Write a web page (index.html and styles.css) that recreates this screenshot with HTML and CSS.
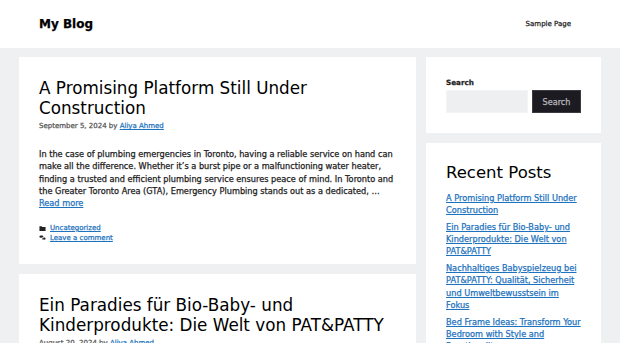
FILE: index.html
```html
<!DOCTYPE html>
<html lang="en">
<head>
  <meta charset="UTF-8">
  <meta name="viewport" content="width=device-width, initial-scale=1.0">
  <title>My Blog</title>
  <link rel="stylesheet" href="styles.css">
</head>
<body>
  <header class="site-header">
    <p class="site-title">My Blog</p>
    <nav class="main-nav">
      <a href="#">Sample Page</a>
    </nav>
  </header>

  <div class="site-content">
    <main class="content-area">
      <article class="post">
        <h2 class="entry-title">A Promising Platform Still Under Construction</h2>
        <div class="entry-meta">September 5, 2024 by <a href="#">Aliya Ahmed</a></div>
        <div class="entry-summary">
          <p>In the case of plumbing emergencies in Toronto, having a reliable service on hand can make all the difference. Whether it’s a burst pipe or a malfunctioning water heater, finding a trusted and efficient plumbing service ensures peace of mind. In Toronto and the Greater Toronto Area (GTA), Emergency Plumbing stands out as a dedicated, …<a class="read-more" href="#">Read more</a></p>
        </div>
        <footer class="entry-footer">
          <div class="meta-line">
            <svg class="meta-icon" viewBox="0 0 16 16"><path d="M1 3h5l1.5 1.5H15v9H1z" fill="#222"/></svg>
            <a href="#">Uncategorized</a>
          </div>
          <div class="meta-line">
            <svg class="meta-icon" viewBox="0 0 16 16"><path d="M1 3.5C1 1.8 3 1 5.5 1S10 1.8 10 3.5 8 6 5.5 6c-.6 0-1.1 0-1.6-.2L1.5 7.2l.6-2C1.4 4.7 1 4.1 1 3.5z" fill="#222"/><path d="M11 5c2.4.2 4 1.4 4 2.9 0 .7-.4 1.3-1.100 1.8l.6 2-2.4-1.4c-.5.1-1 .2-1.6.2-2 0-3.6-.8-4.2-2 2.6-.2 4.6-1.6 4.7-3.5z" fill="#222"/></svg>
            <a href="#">Leave a comment</a>
          </div>
        </footer>
      </article>

      <article class="post">
        <h2 class="entry-title">Ein Paradies für Bio-Baby- und Kinderprodukte: Die Welt von PAT&amp;PATTY</h2>
        <div class="entry-meta">August 20, 2024 by <a href="#">Aliya Ahmed</a></div>
        <div class="entry-summary">
          <p>Wenn es um die Bedürfnisse unserer Kleinsten geht, wollen Eltern nur das Beste. Nachhaltige und biologische Produkte sind für viele Familien …</p>
        </div>
      </article>
    </main>

    <aside class="sidebar">
      <section class="widget">
        <form class="search-form">
          <label class="search-label" for="s">Search</label>
          <div class="search-row">
            <input class="search-input" type="search" id="s">
            <button class="search-button" type="button">Search</button>
          </div>
        </form>
      </section>

      <section class="widget">
        <h2 class="widget-title">Recent Posts</h2>
        <ul class="recent-posts">
          <li><a href="#">A Promising Platform Still Under Construction</a></li>
          <li><a href="#">Ein Paradies für Bio-Baby- und Kinderprodukte: Die Welt von PAT&amp;PATTY</a></li>
          <li><a href="#">Nachhaltiges Babyspielzeug bei PAT&amp;PATTY: Qualität, Sicherheit und Umweltbewusstsein im Fokus</a></li>
          <li><a href="#">Bed Frame Ideas: Transform Your Bedroom with Style and Functionality</a></li>
        </ul>
      </section>
    </aside>
  </div>
</body>
</html>
```

FILE: styles.css
```css
body {
  margin: 0;
  background-color: #eff0f2;
  color: #222;
  font-family: "DejaVu Sans", sans-serif;
  font-size: 8.2px;
  line-height: 12.3px;
  -webkit-text-stroke: 0.25px;
}
a {
  color: #1e73be;
}
.site-header {
  height: 48px;
  background-color: #fff;
  display: flex;
  align-items: center;
  justify-content: space-between;
  padding: 0 39px;
}
.site-title {
  margin: 0;
  font-size: 12px;
  font-weight: bold;
  color: #000;
}
.main-nav a {
  display: block;
  padding: 0 10px;
  color: #222;
  text-decoration: none;
  font-size: 7px;
}
.site-content {
  display: flex;
  gap: 10px;
  padding: 9px 20px 0 19px;
}
.content-area {
  flex: 0 0 397px;
}
.sidebar {
  flex: 1;
}
.post {
  background-color: #fff;
  padding: 20px;
  margin-bottom: 10px;
}
.entry-title {
  margin: 0;
  padding-top: 1px;
  font-size: 16.8px;
  line-height: 20px;
  font-weight: normal;
  color: #000;
  -webkit-text-stroke: 0;
}
.entry-meta {
  margin-top: 3px;
  font-size: 7px;
  line-height: 10.5px;
  color: #555;
}
.entry-summary p {
  margin: 16.5px 0 0;
}
.read-more {
  display: block;
}
.entry-footer {
  margin-top: 13.4px;
  font-size: 7px;
  line-height: 10.5px;
}
.meta-line {
  display: flex;
  align-items: center;
  gap: 4px;
}
.meta-icon {
  width: 7px;
  height: 7px;
}
.widget {
  background-color: #fff;
  padding: 20px;
  margin-bottom: 10px;
}
.search-label {
  display: block;
  padding-top: 1px;
  font-size: 7.2px;
  line-height: 10.8px;
  font-weight: bold;
  margin-bottom: 1.5px;
}
.search-row {
  display: flex;
  gap: 4px;
}
.search-input {
  box-sizing: border-box;
  width: 82px;
  height: 23px;
  margin: 0;
  border: 1px solid #f3f4f5;
  background-color: #eeeff1;
}
.search-button {
  box-sizing: border-box;
  width: 49px;
  height: 23px;
  margin: 0;
  padding: 0;
  border: 1px solid #3a3a40;
  background-color: #1c1b21;
  color: #b9b9be;
  font-family: "DejaVu Sans", sans-serif;
  font-size: 8.1px;
}
.widget-title {
  margin: 0 0 8.7px;
  font-size: 16.5px;
  line-height: 19.8px;
  font-weight: normal;
  color: #000;
  -webkit-text-stroke: 0;
}
.recent-posts {
  list-style: none;
  margin: 0;
  padding: 0;
}
.recent-posts li {
  margin-bottom: 4.4px;
}
```
